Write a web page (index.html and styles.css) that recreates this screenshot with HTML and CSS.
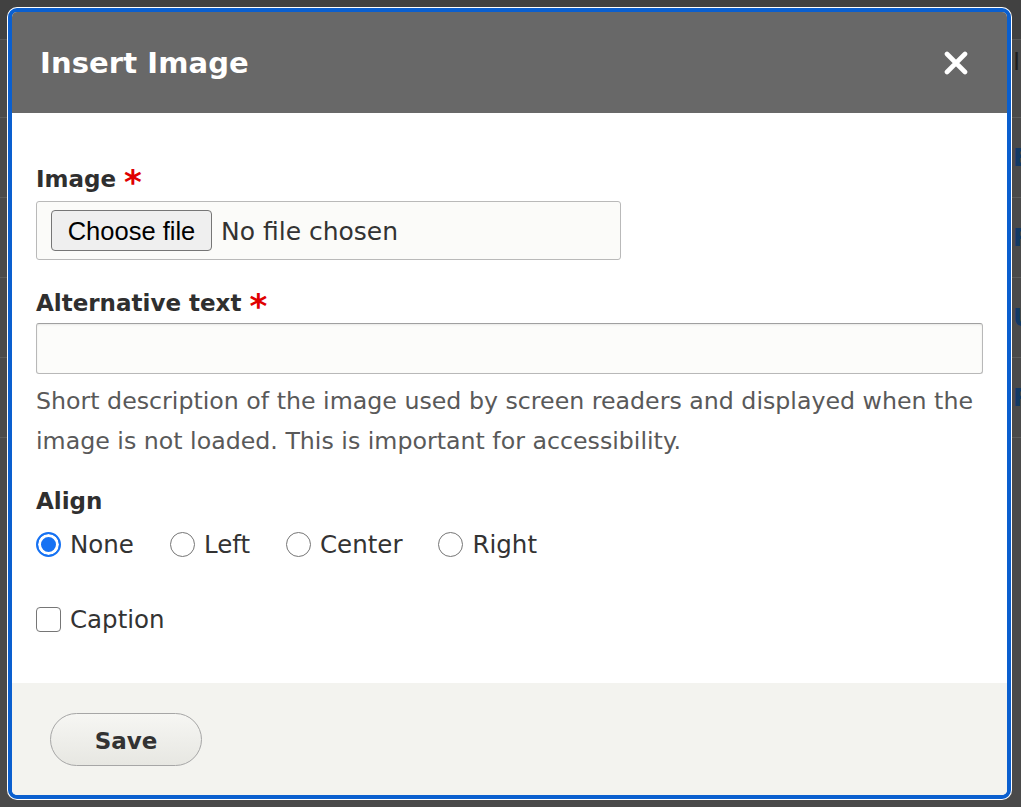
FILE: index.html
```html
<!DOCTYPE html>
<html lang="en">
<head>
<meta charset="utf-8">
<title>Insert Image</title>
<link rel="stylesheet" href="styles.css">
</head>
<body>
<div class="page">
  <div class="page-top"></div>
  <div class="page-table">
    <div class="page-row page-head"><span>Image</span></div>
    <div class="page-row"><span>Edit</span></div>
    <div class="page-row"><span>Remove</span></div>
    <div class="page-row"><span>Update</span></div>
    <div class="page-row"><span>Remove</span></div>
  </div>
</div>

<div class="dialog" role="dialog" aria-labelledby="dlg-title">
  <div class="dialog-titlebar">
    <h1 class="dialog-title" id="dlg-title">Insert Image</h1>
    <button class="dialog-close" type="button" aria-label="Close">
      <svg width="24" height="24" viewBox="0 0 24 24" aria-hidden="true">
        <path d="M3 3 L21 21 M21 3 L3 21" stroke="#fff" stroke-width="4.6" stroke-linecap="round" fill="none"/>
      </svg>
    </button>
  </div>

  <form class="dialog-body">
    <div class="form-item">
      <label class="form-label">Image<span class="req">*</span></label>
      <div class="file-field">
        <span class="file-btn">Choose file</span>
        <span class="file-name">No file chosen</span>
      </div>
    </div>

    <div class="form-item">
      <label class="form-label" for="alt">Alternative text<span class="req">*</span></label>
      <input class="text-input" id="alt" type="text">
      <div class="description">Short description of the image used by screen readers and displayed when the image is not loaded. This is important for accessibility.</div>
    </div>

    <div class="form-item align-item">
      <div class="form-label">Align</div>
      <div class="radios">
        <label class="option"><input type="radio" name="align" class="radio" checked><span>None</span></label>
        <label class="option"><input type="radio" name="align" class="radio"><span>Left</span></label>
        <label class="option"><input type="radio" name="align" class="radio"><span>Center</span></label>
        <label class="option"><input type="radio" name="align" class="radio"><span>Right</span></label>
      </div>
    </div>

    <div class="form-item checkbox-item">
      <label class="option"><input type="checkbox" class="checkbox"><span>Caption</span></label>
    </div>
  </form>

  <div class="dialog-footer">
    <button class="btn-save" type="button">Save</button>
  </div>
</div>
</body>
</html>
```

FILE: styles.css
```css
html, body {
  margin: 0;
  padding: 0;
}

body {
  width: 1021px;
  height: 807px;
  overflow: hidden;
  background: #4a4a4a;
  font-family: "DejaVu Sans", sans-serif;
  position: relative;
}

/* background page (under the modal overlay) */
.page {
  width: 1021px;
}

.page-top {
  height: 40px;
  background: #414141;
  border-bottom: 1px solid #575757;
  box-sizing: border-box;
}

.page-row {
  height: 80px;
  box-sizing: border-box;
  border-bottom: 1px solid #5c5c5c;
  padding-left: 1013px;
  display: flex;
  align-items: center;
  font-weight: bold;
  font-size: 24px;
  color: #123a66;
  white-space: nowrap;
  overflow: hidden;
}

.page-head {
  height: 78px;
  align-items: flex-start;
  padding-top: 8px;
  color: #1f1f1f;
  font-weight: normal;
}

/* dialog */
.dialog {
  position: absolute;
  left: 8px;
  top: 8px;
  width: 995px;
  height: 783px;
  border: 4px solid #0a5fcf;
  border-radius: 9px;
  box-shadow: 0 0 0 1px #ffffff;
  background: #ffffff;
  overflow: hidden;
  display: flex;
  flex-direction: column;
}

.dialog-titlebar {
  height: 101px;
  flex: none;
  background: #686868;
  display: flex;
  align-items: center;
  justify-content: space-between;
  padding: 0 39px 0 28px;
}

.dialog-title {
  margin: 0;
  color: #ffffff;
  font-size: 29px;
  font-weight: bold;
  line-height: 36px;
  letter-spacing: 0.1px;
}

.dialog-close {
  width: 24px;
  height: 24px;
  padding: 0;
  border: 0;
  background: transparent;
  display: flex;
}

.dialog-body {
  flex: 1;
  margin: 0;
  padding: 51px 24px 0 24px;
  color: #333333;
}

.form-item + .form-item {
  margin-top: 28px;
}

.form-item.align-item {
  margin-top: 25px;
}

.form-label {
  display: block;
  font-size: 23px;
  font-weight: bold;
  line-height: 30px;
  color: #2f2f2f;
  margin-bottom: 7px;
}

.req {
  color: #e00000;
  font-size: 34px;
  line-height: 0;
  margin-left: 8px;
  vertical-align: -7px;
}

.file-field {
  width: 585px;
  height: 59px;
  box-sizing: border-box;
  border: 1px solid #b9b9b9;
  border-radius: 3px;
  background: #fbfbf9;
  display: flex;
  align-items: center;
  padding: 0 14px;
  gap: 9px;
}

.file-btn {
  width: 161px;
  height: 41px;
  box-sizing: border-box;
  border: 1px solid #767676;
  border-radius: 4px;
  background: #efefef;
  font-family: "Liberation Sans", Arial, sans-serif;
  font-size: 25.5px;
  color: #000000;
  display: flex;
  align-items: center;
  justify-content: center;
  padding-top: 2px;
}

.file-name {
  font-size: 25px;
  color: #333333;
  padding-top: 2px;
}

.text-input {
  display: block;
  width: 100%;
  height: 51px;
  box-sizing: border-box;
  margin: 0;
  border: 1px solid #b8b8b8;
  border-top-color: #a0a0a0;
  border-radius: 3px;
  background: #fcfcfa;
  box-shadow: inset 0 1px 2px rgba(0, 0, 0, 0.08);
  font: 24px "DejaVu Sans", sans-serif;
}

.form-label + .text-input {
  margin-top: -2px;
}

.description {
  margin-top: 7px;
  font-size: 23.7px;
  line-height: 40px;
  color: #595959;
}

.radios {
  display: flex;
  gap: 36px;
  margin-top: 13px;
}

.option {
  display: flex;
  align-items: center;
  gap: 9px;
  height: 30px;
  font-size: 24.5px;
  color: #333333;
}

.radio,
.checkbox {
  appearance: none;
  -webkit-appearance: none;
  margin: 0;
  width: 25px;
  height: 25px;
  box-sizing: border-box;
  background: #ffffff;
  border: 1.5px solid #767676;
  flex: none;
}

.radio {
  border-radius: 50%;
}

.radio:checked {
  border: 2.5px solid #1672f3;
  background: #1672f3;
  box-shadow: inset 0 0 0 3px #ffffff;
}

.checkbox {
  border-radius: 4px;
}

.form-item.checkbox-item {
  margin-top: 45px;
}

.dialog-footer {
  height: 112px;
  flex: none;
  box-sizing: border-box;
  background: #f3f3ef;
  padding: 30px 38px;
}

.btn-save {
  width: 152px;
  height: 53px;
  box-sizing: border-box;
  border: 1px solid #a6a6a6;
  border-radius: 27px;
  background: linear-gradient(#f6f6f3, #e7e7e2);
  font-family: "DejaVu Sans", sans-serif;
  font-size: 23px;
  font-weight: bold;
  color: #333333;
  padding: 2px 0 0;
}
```
